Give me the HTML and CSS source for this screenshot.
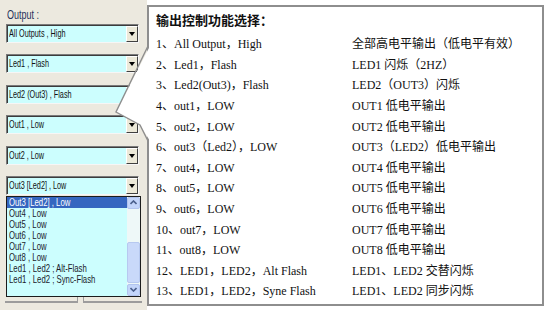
FILE: index.html
```html
<!DOCTYPE html>
<html lang="zh">
<head>
    <meta charset="UTF-8">
    <title>输出控制功能选择</title>
    <link rel="stylesheet" href="styles.css">
</head>
<body>
<div class="page">
    <div class="side">
        <div class="label"><span class="sq">Output :</span></div>

        <div class="combo"><span class="val"><span class="sq">All Outputs , High</span></span><span class="drop"></span></div>
        <div class="combo"><span class="val"><span class="sq">Led1 , Flash</span></span><span class="drop"></span></div>
        <div class="combo"><span class="val"><span class="sq">Led2 (Out3) , Flash</span></span><span class="drop"></span></div>
        <div class="combo"><span class="val"><span class="sq">Out1 , Low</span></span><span class="drop"></span></div>
        <div class="combo"><span class="val"><span class="sq">Out2 , Low</span></span><span class="drop"></span></div>
        <div class="combo"><span class="val"><span class="sq">Out3 [Led2] , Low</span></span><span class="drop"></span></div>

        <div class="list">
            <div class="items">
                <div class="item sel"><span class="sq">Out3 [Led2] , Low</span></div>
                <div class="item"><span class="sq">Out4 , Low</span></div>
                <div class="item"><span class="sq">Out5 , Low</span></div>
                <div class="item"><span class="sq">Out6 , Low</span></div>
                <div class="item"><span class="sq">Out7 , Low</span></div>
                <div class="item"><span class="sq">Out8 , Low</span></div>
                <div class="item"><span class="sq">Led1 , Led2 ; Alt-Flash</span></div>
                <div class="item"><span class="sq">Led1 , Led2 ; Sync-Flash</span></div>
            </div>
            <div class="scroll">
                <div class="sbtn">
                    <svg width="7" height="5" viewBox="0 0 7 5"><polyline points="0.5,4 3.5,1 6.5,4" fill="none" stroke="#4a5f8c" stroke-width="1.6"/></svg>
                </div>
                <div class="track"><div class="thumb"></div></div>
                <div class="sbtn">
                    <svg width="7" height="5" viewBox="0 0 7 5"><polyline points="0.5,1 3.5,4 6.5,1" fill="none" stroke="#4a5f8c" stroke-width="1.6"/></svg>
                </div>
            </div>
        </div>

        <div class="tabs"><span class="tab-a"></span><span class="tab-b"></span></div>
    </div>

    <div class="panel">
        <div class="title">输出控制功能选择：</div>
        <div class="rows">
            <span>1、All Output，High</span><span>全部高电平输出（低电平有效）</span>
            <span>2、Led1，Flash</span><span>LED1 闪烁（2HZ）</span>
            <span>3、Led2(Out3)，Flash</span><span>LED2（OUT3）闪烁</span>
            <span>4、out1，LOW</span><span>OUT1 低电平输出</span>
            <span>5、out2，LOW</span><span>OUT2 低电平输出</span>
            <span>6、out3（Led2），LOW</span><span>OUT3（LED2）低电平输出</span>
            <span>7、out4，LOW</span><span>OUT4 低电平输出</span>
            <span>8、out5，LOW</span><span>OUT5 低电平输出</span>
            <span>9、out6，LOW</span><span>OUT6 低电平输出</span>
            <span>10、out7，LOW</span><span>OUT7 低电平输出</span>
            <span>11、out8，LOW</span><span>OUT8 低电平输出</span>
            <span>12、LED1，LED2，Alt Flash</span><span>LED1、LED2 交替闪烁</span>
            <span>13、LED1，LED2，Syne Flash</span><span>LED1、LED2 同步闪烁</span>
        </div>
    </div>

    <!-- callout tail pointing at the Out1 combo -->
    <svg class="tail" width="550" height="310" viewBox="0 0 550 310">
        <polygon points="150,46 116,112 140,125 150,141" fill="#fff"/>
        <polyline points="148,46 116,112 140,125 148,141" fill="none" stroke="#8e8e8e" stroke-width="1.4"/>
    </svg>
</div>
</body>
</html>
```
FILE: styles.css
```css
body {
    margin: 0;
    background: #fff;
}

.page {
    position: relative;
    display: flex;
    width: 550px;
    height: 310px;
    overflow: hidden;
}

/* left: the combo boxes */
.side {
    width: 147px;
    box-sizing: border-box;
    padding: 8px 0 0 6px;
    background: #ece9df;
    font-family: "Liberation Sans", Arial, sans-serif;
    font-size: 11px;
    color: #111;
}

.sq {
    display: inline-block;
    white-space: nowrap;
    transform: scaleX(0.66);
    transform-origin: 0 50%;
}

.label {
    height: 14px;
    line-height: 14px;
    font-size: 12px;
    color: #26305a;
    margin-bottom: 2px;
    padding-left: 1px;
}

.label .sq {
    transform: scaleX(0.75);
}

.combo {
    display: flex;
    width: 133px;
    height: 19px;
    box-sizing: border-box;
    border: 1px solid;
    border-color: #7a7a7a #f6f6f6 #f6f6f6 #7a7a7a;
    box-shadow: inset 1px 1px 0 #3c3c3c;
    background: #ccfefe;
    margin-bottom: 11.4px;
}

.combo:nth-of-type(7) {
    margin-bottom: 1px;
}

.val {
    flex: 1;
    line-height: 17px;
    padding-left: 2px;
    overflow: hidden;
}

.drop {
    display: flex;
    align-items: center;
    justify-content: center;
    width: 12px;
    margin: 1px 0 0;
    box-sizing: border-box;
    background: #ece9d8;
    border: 1px solid;
    border-color: #fff #404040 #404040 #fff;
}

.drop::after {
    content: "";
    border-left: 3px solid transparent;
    border-right: 3px solid transparent;
    border-top: 4px solid #000;
}

.list {
    display: flex;
    width: 135px;
    height: 101px;
    box-sizing: border-box;
    border: 1px solid #1c1c1c;
    background: #ccfefe;
}

.items {
    flex: 1;
}

.item {
    height: 11px;
    line-height: 11px;
    padding-left: 2px;
    font-size: 10.5px;
    color: #1a1a2a;
}

.item .sq {
    transform: scaleX(0.74);
}

.item.sel {
    background: #3566c0;
    color: #fff;
}

.scroll {
    display: flex;
    flex-direction: column;
    width: 13px;
    background: #eef8f8;
}

.sbtn {
    display: flex;
    align-items: center;
    justify-content: center;
    height: 12px;
    box-sizing: border-box;
    background: #c3d5fa;
    border: 1px solid #b1c4ee;
    border-radius: 2px;
}

.track {
    flex: 1;
    padding-top: 33px;
    padding-bottom: 1px;
    display: flex;
    flex-direction: column;
}

.thumb {
    flex: 1;
    background: #c9d9fa;
    border: 1px solid #b7c9f0;
    border-radius: 2px;
}

.tabs {
    display: flex;
    height: 6px;
    margin-left: -1px;
}

.tab-a {
    width: 72px;
    border-bottom: 2px solid #9c9c9c;
    border-right: 1px solid #9c9c9c;
}

.tab-b {
    width: 58px;
    margin-left: 5px;
    border-bottom: 2px solid #9c9c9c;
    border-left: 1px solid #9c9c9c;
}

/* right: the callout with the function list */
.panel {
    width: 397px;
    height: 301px;
    margin-top: 5px;
    box-sizing: border-box;
    border: 2px solid #8e8e8e;
    background: #fff;
    padding: 3px 0 0 7px;
    font-family: "Liberation Serif", "Noto Sans CJK SC", serif;
    font-size: 12px;
    color: #111;
}

.title {
    height: 20px;
    line-height: 20px;
    font-family: "Noto Sans CJK SC", sans-serif;
    font-size: 13px;
    font-weight: 700;
    margin-bottom: 3px;
}

.rows {
    display: grid;
    grid-template-columns: 196px auto;
    grid-auto-rows: 20.6px;
    align-items: center;
    white-space: nowrap;
}

.tail {
    position: absolute;
    left: 0;
    top: 0;
    pointer-events: none;
}
```
